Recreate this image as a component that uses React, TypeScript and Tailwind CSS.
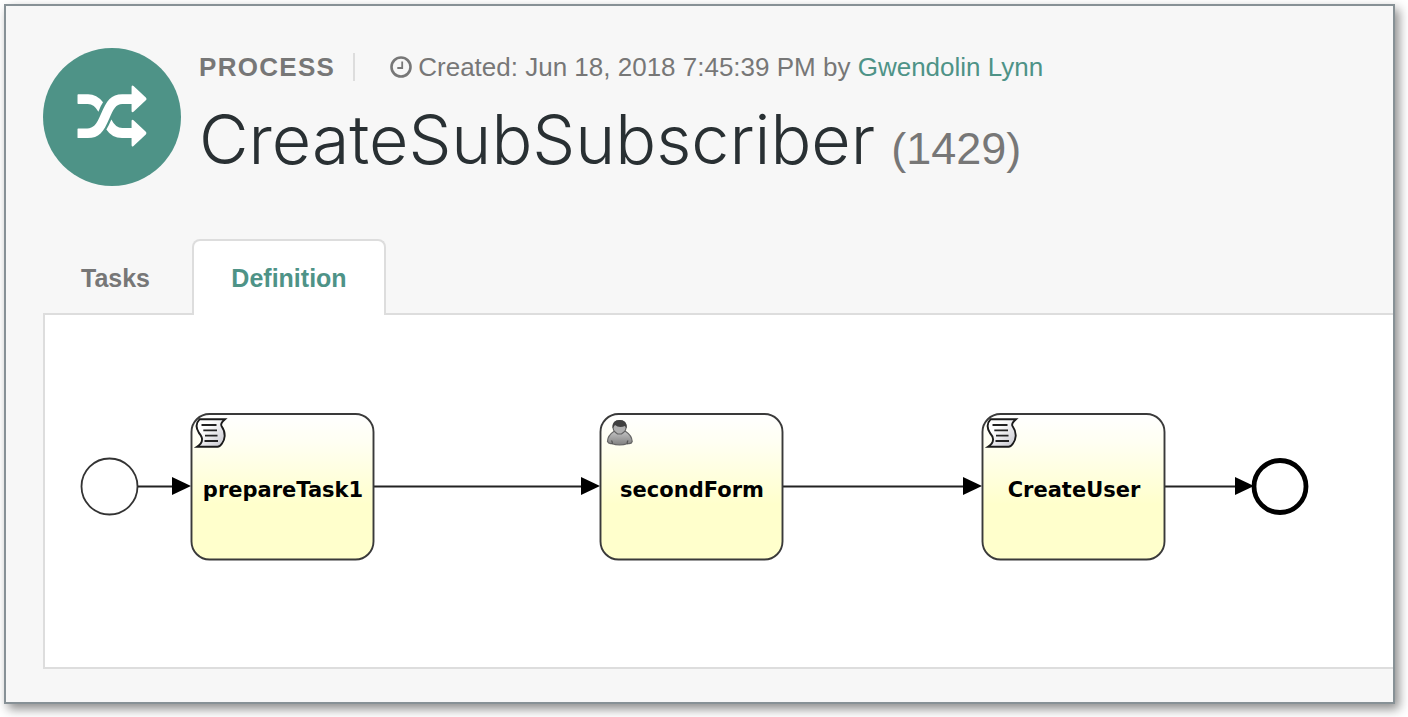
import React from 'react';

type TaskKind = 'script' | 'user';

interface TaskNode {
  x: number;
  name: string;
  kind: TaskKind;
}

const tasks: TaskNode[] = [
  { x: 191, name: 'prepareTask1', kind: 'script' },
  { x: 600, name: 'secondForm', kind: 'user' },
  { x: 982, name: 'CreateUser', kind: 'script' },
];

const flows = [
  { from: 138, to: 191 },
  { from: 374, to: 600 },
  { from: 783, to: 982 },
  { from: 1165, to: 1254 },
];

function ShuffleIcon() {
  return (
    <svg viewBox="229 252 216 193" className="h-16 w-18" fill="white" aria-hidden="true">
      <path d="M235 280H265Q291 280 310 304Q302 315 296 333Q284 309 264 309H235Q233 309 233 307V282Q233 280 235 280Z" />
      <path d="M235 383H262C281 383 290 372 304 339C321 299 334 280 368 280H396V257Q397 251 402 255L439 290Q443 294 439 298L402 333Q397 336 396 331V309H368C349 309 341 324 329 353C311 395 298 412 264 412H235Q233 412 233 410V385Q233 383 235 383Z" />
      <path d="M335 356Q348 382 368 382H396V360Q397 355 402 358L439 393Q443 397 439 401L402 436Q397 440 396 434V412H367Q337 412 320 386Q328 373 335 356Z" />
    </svg>
  );
}

function ClockIcon() {
  return (
    <svg viewBox="0 0 22 22" className="size-[22px]" fill="none" stroke="currentColor" aria-hidden="true">
      <circle cx="11" cy="11" r="9.5" strokeWidth="2.6" />
      <path d="M12.2 5.6V12H7.3" strokeWidth="1.8" />
    </svg>
  );
}

function ScriptGlyph() {
  return (
    <g>
      <path
        d="M8.500 6.300H34Q29 10.500 30.500 13Q34 18 33.700 23Q33.500 27 31 30.500Q29 33.700 26.500 33.700H6Q11 30.500 11 27Q11.500 24 8 20Q3 12 8.500 6.300Z"
        fill="url(#paper)"
        stroke="#1b1b1b"
        strokeWidth="1.9"
      />
      <path d="M10.500 12H25.500M12.300 17.300H26M14 22.700H26.500M13.500 28H27" stroke="#222" strokeWidth="1.8" />
    </g>
  );
}

function UserGlyph() {
  return (
    <g>
      <path
        d="M14.500 18Q7.500 22.500 7.500 28.500Q8.500 31 11.500 30.500Q19.500 33.500 28 30.500Q31.500 31 32.200 28.500Q32 22.500 25 18Z"
        fill="url(#body)"
        stroke="#666"
        strokeWidth="1.2"
      />
      <path d="M11.500 27.500Q13 30 11.800 31M28 27.500Q26.500 30 27.700 31" stroke="#555" strokeWidth="1.2" fill="none" />
      <path
        d="M13 14Q13 7.500 19.600 7.500T26.200 14Q26 17.500 24 19L21.500 21H17.500L15 19Q13 17.500 13 14Z"
        fill="#b0b0b0"
        stroke="#606060"
        strokeWidth="1.1"
      />
      <path d="M12.500 15.500Q12 7 19.600 7T26.700 15.500L25 13Q19 15.500 15 12Z" fill="#404040" />
    </g>
  );
}

function ProcessDiagram() {
  return (
    <svg
      viewBox="45 315 1348 352"
      className="block w-full"
      role="img"
      aria-label="Process definition"
    >
      <defs>
        <linearGradient id="task" x1="0" y1="0" x2="0" y2="1">
          <stop offset="0" stopColor="#ffffff" />
          <stop offset="0.2" stopColor="#fffff2" />
          <stop offset="0.62" stopColor="#ffffcc" />
          <stop offset="1" stopColor="#ffffcc" />
        </linearGradient>
        <linearGradient id="paper" x1="0" y1="0" x2="1" y2="1">
          <stop offset="0.3" stopColor="#ffffff" />
          <stop offset="1" stopColor="#c4c4cc" />
        </linearGradient>
        <linearGradient id="body" x1="0" y1="0" x2="0" y2="1">
          <stop offset="0" stopColor="#c4c4c4" />
          <stop offset="1" stopColor="#808080" />
        </linearGradient>
      </defs>
      <circle cx="109.500" cy="486.500" r="28" fill="white" stroke="#333" strokeWidth="1.8" />
      {flows.map((flow) => (
        <g key={flow.from}>
          <path d={`M${flow.from} 486.500H${flow.to - 10}`} stroke="#222" strokeWidth="1.9" />
          <path d={`M${flow.to - 19} 477L${flow.to} 486L${flow.to - 19} 495Z`} fill="black" />
        </g>
      ))}
      {tasks.map((task) => (
        <g key={task.name} transform={`translate(${task.x} 413)`}>
          <rect x="0.500" y="1" width="182" height="145.500" rx="18" fill="url(#task)" stroke="#3a3a3a" strokeWidth="1.9" />
          {task.kind === 'script' ? <ScriptGlyph /> : <UserGlyph />}
          <text x="92" y="84" textAnchor="middle" className="fill-black font-['DejaVu_Sans',sans-serif] text-[21px] font-bold">
            {task.name}
          </text>
        </g>
      ))}
      <circle cx="1280" cy="486.500" r="26" fill="white" stroke="black" strokeWidth="4.800" />
    </svg>
  );
}

export default function App() {
  return (
    <div className="min-h-screen bg-white pt-1 pr-[13px] pb-[13px] pl-1 font-['Liberation_Sans',Arial,sans-serif]">
      <main className="border-2 border-[#879196] bg-[#f7f7f7] pt-[42px] pb-[33px] pl-[37px] shadow-[4px_5px_10px_rgba(0,0,0,0.45)]">
        <header className="flex gap-[18px]">
          <div className="flex size-[138px] shrink-0 items-center justify-center rounded-full bg-[#4e9387]">
            <ShuffleIcon />
          </div>
          <div className="min-w-0">
            <div className="flex items-center pt-1 text-[26px] leading-[30px] text-[#777]">
              <span className="border-r-2 border-[#ddd] pr-[18px] leading-[28px] font-bold tracking-wider">PROCESS</span>
              <span className="flex items-center gap-1.5 pl-[35px]">
                <ClockIcon />
                <span>
                  Created: Jun 18, 2018 7:45:39 PM by{' '}
                  <a href="#user" className="text-[#4e9387]">Gwendolin Lynn</a>
                </span>
              </span>
            </div>
            <h1 className="mt-[15px] flex items-baseline gap-4 font-['Inter',sans-serif] text-[68px] leading-[84px] font-light text-[#293033]">
              CreateSubSubscriber
              <small className="font-['Liberation_Sans',Arial,sans-serif] text-[45px] text-[#777]">(1429)</small>
            </h1>
          </div>
        </header>

        <nav className="mt-12 flex text-[25px] leading-[30px] font-bold" role="tablist">
          <button type="button" role="tab" aria-selected="false" className="w-[149px] pt-1 pr-1 text-[#777]">
            Tasks
          </button>
          <button
            type="button"
            role="tab"
            aria-selected="true"
            className="relative -mb-0.5 w-[194px] rounded-t-lg border-2 border-b-0 border-[#ddd] bg-white pt-[22px] pb-[22px] text-[#4e9387]"
          >
            Definition
          </button>
        </nav>
        <section role="tabpanel" className="border-2 border-r-0 border-[#ddd] bg-white">
          <ProcessDiagram />
        </section>
      </main>
    </div>
  );
}
